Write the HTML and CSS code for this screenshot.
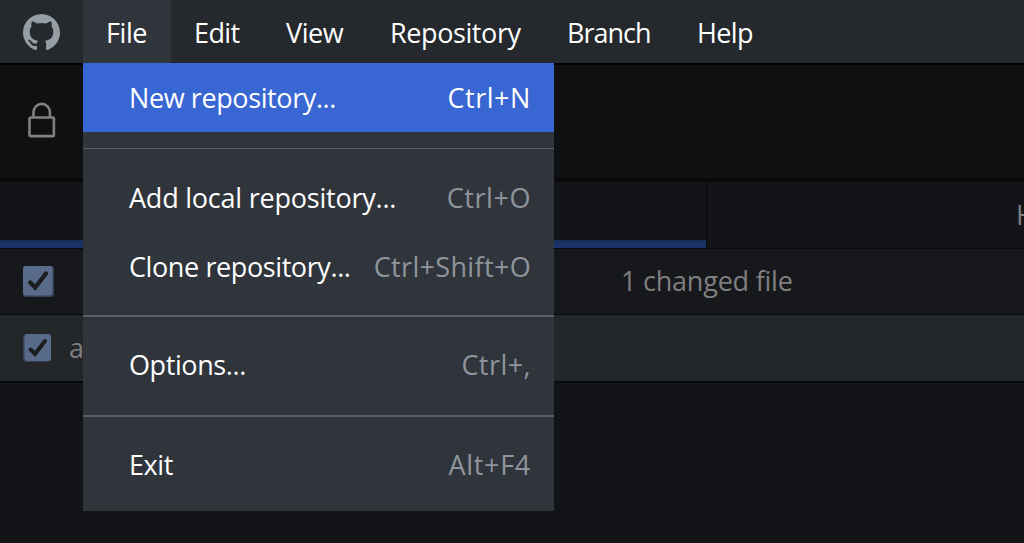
FILE: index.html
```html
<!DOCTYPE html>
<html lang="en">
<head>
<meta charset="utf-8">
<title>GitHub Desktop</title>
<link rel="stylesheet" href="styles.css">
</head>
<body>
<div class="app">
  <header class="titlebar">
    <div class="logo">
      <svg width="37" height="37" viewBox="0 0 16 16"><path fill="#959da5" d="M8 0C3.58 0 0 3.58 0 8c0 3.54 2.29 6.53 5.47 7.59.4.07.55-.17.55-.38 0-.19-.01-.82-.01-1.49-2.01.37-2.53-.49-2.69-.94-.09-.23-.48-.94-.82-1.13-.28-.15-.68-.52-.01-.53.63-.01 1.08.58 1.23.82.72 1.21 1.87.87 2.33.66.07-.52.28-.87.51-1.07-1.78-.2-3.64-.89-3.64-3.95 0-.87.31-1.59.82-2.15-.08-.2-.36-1.02.08-2.12 0 0 .67-.21 2.2.82.64-.18 1.32-.27 2-.27s1.36.09 2 .27c1.53-1.04 2.2-.82 2.2-.82.44 1.1.16 1.92.08 2.12.51.56.82 1.27.82 2.15 0 3.07-1.87 3.75-3.65 3.95.29.25.54.73.54 1.48 0 1.07-.01 1.93-.01 2.2 0 .21.15.46.55.38A8.01 8.01 0 0 0 16 8c0-4.42-3.58-8-8-8z"/></svg>
    </div>
    <nav class="menubar">
      <div class="top file">File</div>
      <div class="top edit">Edit</div>
      <div class="top view">View</div>
      <div class="top repo">Repository</div>
      <div class="top branch">Branch</div>
      <div class="top help">Help</div>
    </nav>
  </header>
  <section class="toolbar">
    <svg class="lock" width="28" height="36" viewBox="0 0 28 36" fill="none" stroke="#808080" stroke-width="2.6"><rect x="1.5" y="15.5" width="24.4" height="18.6" rx="1.2"/><path d="M5.5 15V10.500a8.200 8.600 0 0 1 16.400 0V15"/></svg>
  </section>
  <div class="tabs">
    <div class="tab active"></div>
    <div class="tab"><span class="history">History</span></div>
  </div>
  <div class="row summary">
    <svg class="check" width="31" height="31" viewBox="0 0 31 31"><rect width="31" height="31" rx="3" fill="#364254"/><rect width="29.500" height="29.500" rx="3" fill="#596b8b"/><path d="M7.200 16.500l5 5L23 7.500" fill="none" stroke="#1c1d1f" stroke-width="4.300" stroke-linecap="round"/></svg>
    <span class="count">1 changed file</span>
  </div>
  <div class="row item">
    <svg class="check" width="28" height="28" viewBox="0 0 28 28"><rect width="28" height="28" rx="3" fill="#364254"/><rect x="1.500" width="26.500" height="27" rx="3" fill="#596b8b"/><path d="M7.500 15.500l4.500 4.500L22 7" fill="none" stroke="#1c1d1f" stroke-width="4" stroke-linecap="round"/></svg>
    <span class="name">a</span>
  </div>
  <main class="content"></main>
  <div class="menu">
    <div class="entry selected"><span class="l-new">New repository...</span><span class="key k-new">Ctrl+N</span></div>
    <hr class="thin">
    <div class="entry"><span class="l-add">Add local repository...</span><span class="key k-add">Ctrl+O</span></div>
    <div class="entry"><span class="l-clone">Clone repository...</span><span class="key k-clone">Ctrl+Shift+O</span></div>
    <hr>
    <div class="entry"><span class="l-options">Options...</span><span class="key k-options">Ctrl+,</span></div>
    <hr class="last">
    <div class="entry"><span class="l-exit">Exit</span><span class="key k-exit">Alt+F4</span></div>
  </div>
</div>
</body>
</html>
```
FILE: styles.css
```css
* { box-sizing: border-box; }
body {
  margin: 0;
  background: #131418;
  font: 27px/37px "Open Sans", "Noto Sans", sans-serif;
  letter-spacing: -0.4px;
  color: #fff;
  overflow: hidden;
}
.app { position: relative; width: 1024px; height: 543px; display: flex; flex-direction: column; overflow: hidden; white-space: nowrap; }
.titlebar { display: flex; height: 65px; flex: none; background: #25292d; border-bottom: 2px solid #000; }
.logo { width: 83px; padding: 14px 0 0 23px; }
.logo svg { display: block; }
.menubar { display: flex; }
.top { padding: 14px 0 0 23px; }
.file { width: 88px; background: #30353c; }
.edit { width: 92px; letter-spacing: -0.6px; }
.view { width: 104px; }
.repo { width: 177px; }
.branch { width: 130px; letter-spacing: -1px; }
.help { width: 102px; letter-spacing: -0.6px; }
.toolbar { height: 117px; flex: none; background: #0f1012; border-bottom: 4px solid #090909; padding: 37px 0 0 27.5px; }
.lock { display: block; }
.tabs { display: flex; height: 67px; flex: none; border-bottom: 1px solid #08090a; }
.tab { flex: 1; padding: 14px 0 0 309px; color: #7d7f82; overflow: hidden; }
.tab.active { flex: none; width: 707px; border-right: 1px solid #08090a; background: linear-gradient(#1b2c56 2px, #1b3368 2px) bottom / 100% 8px no-repeat; }
.row { display: flex; align-items: center; flex: none; padding-left: 23px; color: #7f7f80; }
.row span { padding-bottom: 2px; }
.summary { height: 66px; background: #17181b; border-bottom: 1px solid #08090a; }
.item { height: 68px; background: #23272a; border-bottom: 2px solid #08090a; }
.count { margin-left: 567px; letter-spacing: -0.22px; }
.name { margin-left: 18px; }
.content { flex: 1; }
.menu { position: absolute; left: 83px; top: 63px; width: 471px; height: 448px; background: #30353c; }
.entry { display: flex; justify-content: space-between; height: 69px; padding: 16px 23px 0 46px; }
.selected { background: #3866d2; }
.key { color: #8f959c; }
.selected .key { color: #fff; }
.l-add { letter-spacing: -0.22px; }
.k-new, .k-add { letter-spacing: 0.55px; }
.k-clone { letter-spacing: 0.33px; }
.k-options { letter-spacing: 0.45px; }
.k-exit { letter-spacing: 0.7px; }
hr { height: 2px; margin: 14px 0 13px; border: 0; background: #5a5f6a; }
hr.thin { height: 1px; margin: 16px 0 14px; }
hr.last { margin-top: 16px; }
```
